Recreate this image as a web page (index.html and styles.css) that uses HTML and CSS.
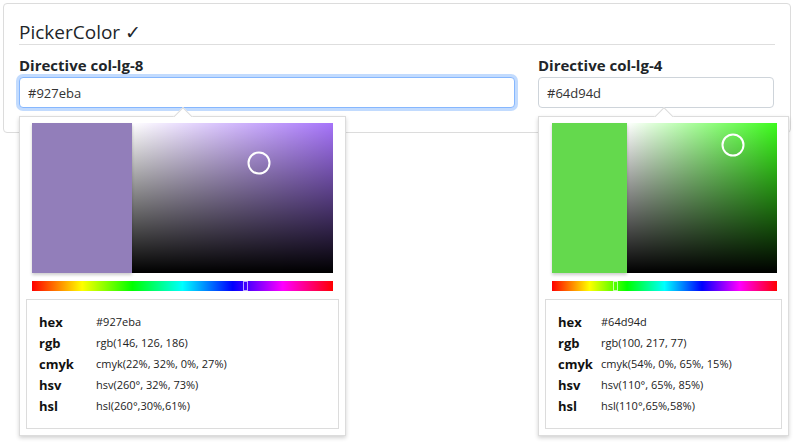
FILE: index.html
```html
<!DOCTYPE html>
<html lang="en">
<head>
<meta charset="utf-8">
<title>PickerColor</title>
<link rel="stylesheet" href="styles.css">
</head>
<body>
<div class="card">
  <h4 class="title">PickerColor ✓</h4>
  <div class="grid">
    <div class="col">
      <label class="lbl">Directive col-lg-8</label>
      <input class="inp focused" type="text" value="#927eba">
      <div class="picker picker-lg">
        <div class="arrow"><span></span></div>
        <div class="area">
          <div class="preview" style="background:#927eba"></div>
          <div class="sat" style="background-color:#a674fa">
            <span class="cursor" style="left:126.5px;top:39.5px"></span>
          </div>
        </div>
        <div class="hue"><span class="hue-mark" style="left:211px"></span></div>
        <div class="info info-lg">
          <div class="info-row"><b>hex</b><span>#927eba</span></div>
          <div class="info-row"><b>rgb</b><span>rgb(146, 126, 186)</span></div>
          <div class="info-row"><b>cmyk</b><span>cmyk(22%, 32%, 0%, 27%)</span></div>
          <div class="info-row"><b>hsv</b><span>hsv(260°, 32%, 73%)</span></div>
          <div class="info-row"><b>hsl</b><span>hsl(260°,30%,61%)</span></div>
        </div>
      </div>
    </div>
    <div class="col">
      <label class="lbl">Directive col-lg-4</label>
      <input class="inp" type="text" value="#64d94d">
      <div class="picker picker-sm">
        <div class="arrow"><span></span></div>
        <div class="area">
          <div class="preview" style="background:#64d94d"></div>
          <div class="sat" style="background-color:#3cfb1c">
            <span class="cursor" style="left:105.5px;top:21.5px"></span>
          </div>
        </div>
        <div class="hue"><span class="hue-mark" style="left:61px"></span></div>
        <div class="info info-sm">
          <div class="info-row"><b>hex</b><span>#64d94d</span></div>
          <div class="info-row"><b>rgb</b><span>rgb(100, 217, 77)</span></div>
          <div class="info-row"><b>cmyk</b><span>cmyk(54%, 0%, 65%, 15%)</span></div>
          <div class="info-row"><b>hsv</b><span>hsv(110°, 65%, 85%)</span></div>
          <div class="info-row"><b>hsl</b><span>hsl(110°,65%,58%)</span></div>
        </div>
      </div>
    </div>
  </div>
</div>
</body>
</html>
```
FILE: styles.css
```css
html, body {
  min-height: 442px;
}

body {
  margin: 0;
  font-family: "Open Sans", "Noto Sans", sans-serif;
  color: #212529;
  background: #fff;
}

.card {
  margin: 3px 5px 0 3px;
  border: 1px solid #dcdcdc;
  border-radius: 4px;
  padding: 15px 15px 24px;
}

.title {
  margin: 0;
  padding-top: 1px;
  font-size: 19px;
  font-weight: 400;
  line-height: 24px;
  border-bottom: 1px solid #dedede;
}

.grid {
  display: grid;
  grid-template-columns: 496px 236px;
  column-gap: 23px;
  margin-top: 8px;
}

.col {
  position: relative;
}

.lbl {
  display: block;
  font-size: 15px;
  font-weight: 700;
  line-height: 24px;
}

.inp {
  display: block;
  width: 100%;
  box-sizing: border-box;
  height: 31px;
  margin: 0;
  padding: 0 8px;
  border: 1px solid #ced4da;
  border-radius: 4px;
  font-family: "Open Sans", "Noto Sans", sans-serif;
  font-size: 13px;
  color: #333;
  outline: none;
}

.inp.focused {
  border-color: #86b7fe;
  box-shadow: 0 0 0 3px rgba(13, 110, 253, 0.25);
}

.picker {
  position: absolute;
  top: calc(100% + 8px);
  left: 0;
  z-index: 2;
  box-sizing: border-box;
  padding: 6px;
  background: #fff;
  border: 1px solid #dcdcdc;
  box-shadow: 0 2px 4px rgba(0, 0, 0, 0.18);
}

.picker-lg { width: 327px; }
.picker-sm { width: 251px; }

.arrow {
  position: absolute;
  top: -10px;
  left: 50%;
  margin-left: -10px;
  width: 20px;
  height: 10px;
  overflow: hidden;
}

.arrow span {
  position: absolute;
  left: 3px;
  top: 3px;
  width: 13px;
  height: 13px;
  background: #fff;
  border-top: 1px solid #dcdcdc;
  border-left: 1px solid #dcdcdc;
  transform: rotate(45deg);
}

.area {
  display: flex;
  height: 150px;
  margin: 0 6px;
}

.picker-sm .area {
  margin: 0 5px 0 7px;
}

.preview {
  flex: 1;
  position: relative;
  z-index: 1;
  box-shadow: 0 2px 3px rgba(0, 0, 0, 0.2);
}

.sat {
  flex: 2;
  position: relative;
  background-image:
    linear-gradient(to top, #000, rgba(0, 0, 0, 0)),
    linear-gradient(to right, #fff, rgba(255, 255, 255, 0));
}

.cursor {
  position: absolute;
  width: 23px;
  height: 23px;
  box-sizing: border-box;
  border: 2.5px solid #fff;
  border-radius: 50%;
  transform: translate(-50%, -50%);
}

.hue {
  position: relative;
  height: 10px;
  margin: 8px 6px 0;
  background: linear-gradient(to right, #f00, #ff0, #0f0, #0ff, #00f, #f0f, #f00);
}

.picker-sm .hue {
  margin: 8px 5px 0 7px;
}

.hue-mark {
  position: absolute;
  top: 0;
  width: 5px;
  height: 10px;
  box-sizing: border-box;
  border: 1px solid rgba(255, 255, 255, 0.65);
}

.info {
  margin-top: 8px;
  height: 130px;
  box-sizing: border-box;
  border: 1px solid #dcdcdc;
  padding: 12px 12px 0;
}

.info-row {
  display: grid;
  align-items: start;
}

.info-lg .info-row { grid-template-columns: 57px 1fr; }
.info-sm .info-row { grid-template-columns: 43px 1fr; }

.info-row b {
  font-size: 13px;
  font-weight: 700;
  line-height: 21px;
  color: #111;
}

.info-row span {
  font-size: 11px;
  line-height: 19px;
  color: #222;
  white-space: nowrap;
}
```
